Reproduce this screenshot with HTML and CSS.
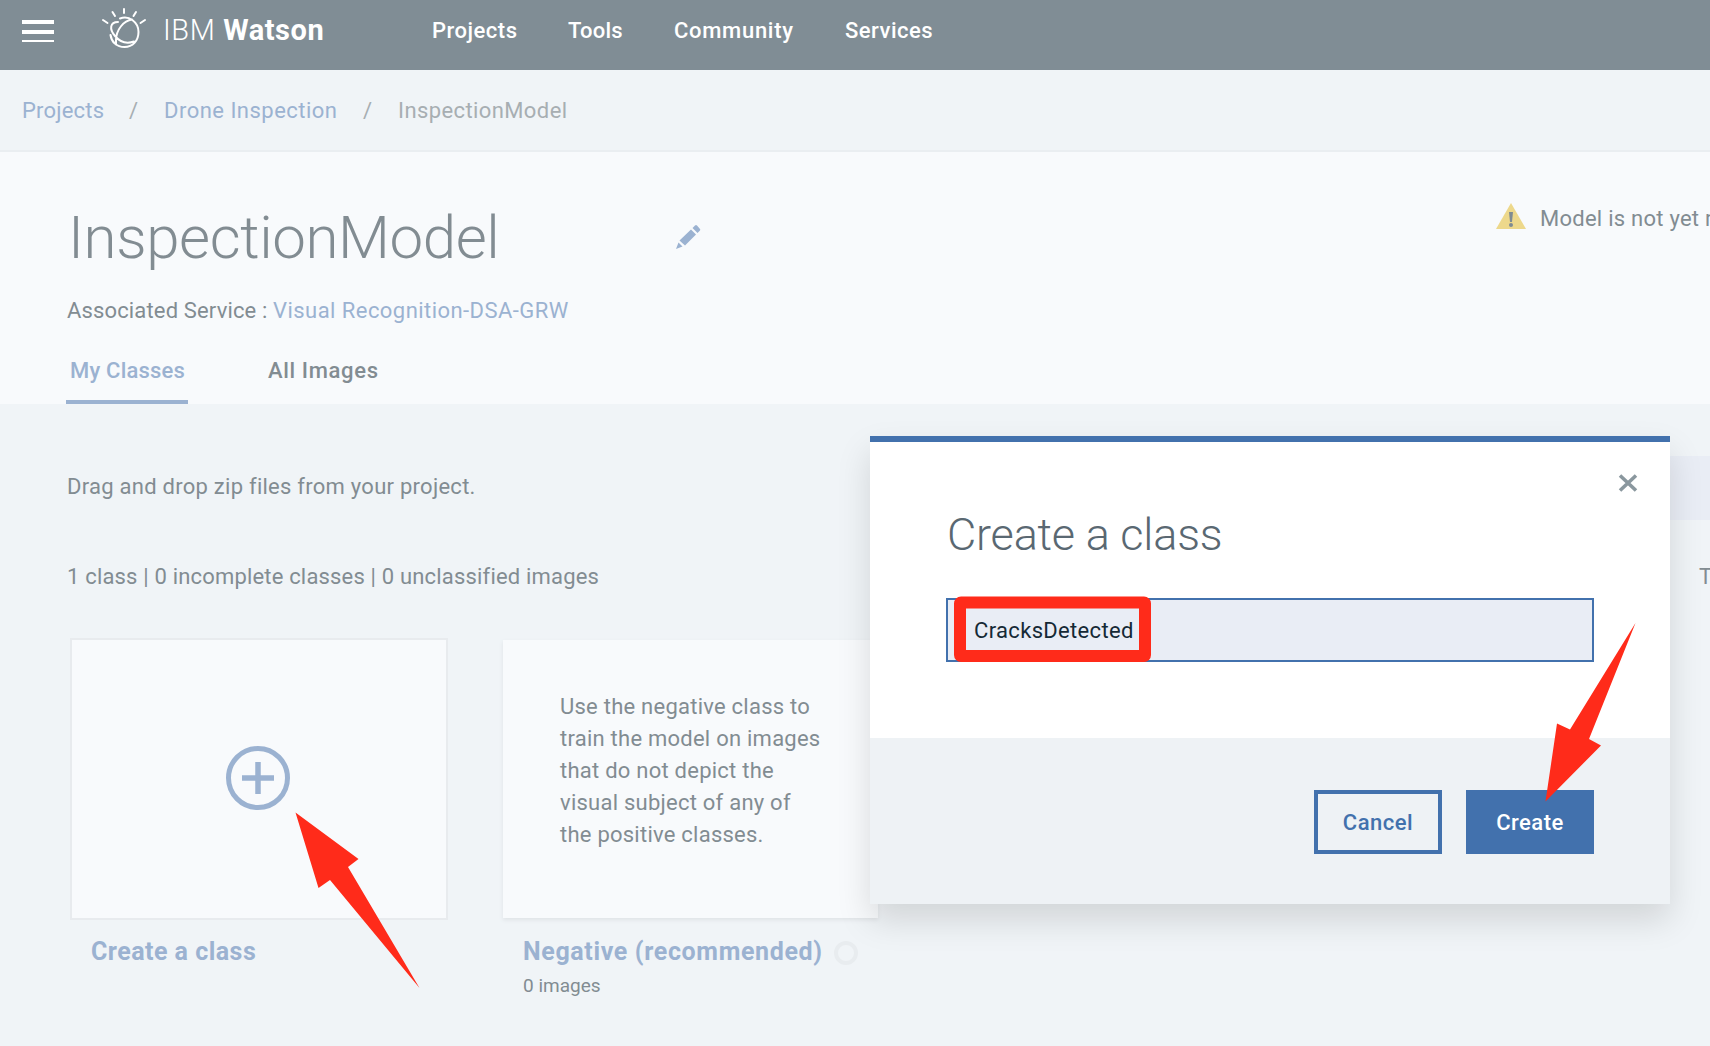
FILE: index.html
```html
<!DOCTYPE html>
<html lang="en"><head><meta charset="utf-8"><title>IBM Watson</title><link rel="stylesheet" href="styles.css"></head>
<body>
<header class="topbar">
  <svg class="burger" viewBox="0 0 32 24" width="32" height="24" fill="#fff"><path d="M0 1h32v4H0zM0 11h32v4H0zM0 21h32v2H0z"/></svg>
  <svg class="logo" viewBox="0 0 46 44" width="46" height="44" fill="none" stroke="#fff" stroke-width="2" stroke-linecap="round"><path d="M19 11.500C28 8 37.500 15 37.500 25c0 9-6 15-14 15-8 0-13-5-14-12M31 12.500c-8 1-16 10-16 21v4M17 15c-8 0-9 7-3 14 5 6 12 8 19 5.500"/><path d="M23 2v4M11.500 5l2.500 4M35 5l-2.500 4M2 13l4.500 3M44 13l-4.500 3"/></svg>
  <span class="brand"><span class="brand-ibm">IBM</span> <b>Watson</b></span>
  <nav class="nav"><a class="n1">Projects</a><a class="n2">Tools</a><a class="n3">Community</a><a class="n4">Services</a></nav>
</header>
<nav class="crumbs"><a class="c1">Projects</a><i>/</i><a class="c2">Drone Inspection</a><i>/</i><span class="c3">InspectionModel</span></nav>
<section class="hero">
  <div class="hero-row"><h1>InspectionModel</h1>
  <svg class="pencil" viewBox="0 0 25 25" width="25" height="25" fill="#9bb2d1"><path d="M19 1.500q1-1 2 0L24 5q.6.800 0 1.600L21.500 9 16.500 4zM15 5.500l5 5L9 21.500l-5.500-5zM2.500 18.500l4 4L0 25z"/></svg>
  <div class="status"><svg viewBox="0 0 30 26" width="30" height="26"><path d="M15 0l15 26H0z" fill="#edd88b"/><path d="M13 9h4l-1 10h-2z" fill="#7f8b92"/><circle cx="15" cy="22" r="2" fill="#7f8b92"/></svg><span>Model is not yet ready to train</span></div></div>
  <p class="service"><span class="s1">Associated Service :</span> <a class="s2">Visual Recognition-DSA-GRW</a></p>
  <div class="tabs"><a class="tab active">My Classes</a><a class="tab">All Images</a></div>
</section>
<main class="content">
  <div class="drag-row"><p class="drag">Drag and drop zip files from your project.</p><div class="search"></div></div>
  <div class="stat-row"><p class="stats">1 class | 0 incomplete classes | 0 unclassified images</p><span class="type">Type</span></div>
  <div class="cards">
    <article class="item"><div class="card bordered"><svg viewBox="0 0 64 64" width="64" height="64" fill="none" stroke="#9bb2d1"><circle cx="32" cy="32" r="29.500" stroke-width="5"/><path d="M16 32h32M32 16v32" stroke-width="5.500"/></svg></div><h2><span class="t1">Create a class</span></h2></article>
    <article class="item"><div class="card note"><p>Use the negative class to<br>train the model on images<br>that do not depict the<br>visual subject of any of<br>the positive classes.</p></div><h2><span class="t2">Negative (recommended)</span><i class="ring"></i></h2><p class="count">0 images</p></article>
  </div>
</main>
<div class="modal">
  <div class="modal-body"><svg class="close" viewBox="0 0 20 18" width="20" height="18"><path d="M2 1.500l16 15M18 1.500l-16 15" stroke="#8a979e" stroke-width="3.600"/></svg><h3>Create a class</h3><div class="field">CracksDetected</div></div>
  <div class="modal-foot"><button class="cancel">Cancel</button><button class="create">Create</button></div>
</div>
<svg class="marks" viewBox="0 0 1710 1046" width="1710" height="1046" fill="#ff2b1a"><path d="M295.500 812.500L358.500 859L348 867L419.500 988L330 880L318.500 888z"/><path d="M1635.500 623L1589 739L1601 745.500L1545.500 801.500L1557 723.500L1570 729.500z"/><rect x="960" y="602.500" width="185" height="53.500" rx="1" fill="none" stroke="#ff2b1a" stroke-width="12" stroke-linejoin="round"/></svg>
</body></html>
```
FILE: styles.css
```css
*{box-sizing:border-box}
body{margin:0;width:1710px;height:1046px;overflow:hidden;background:#f0f4f7;font-family:Roboto,"Liberation Sans",sans-serif;font-size:22px;color:#828c92}
h1,h2,h3,p{margin:0;font-weight:400}
i{font-style:normal}
.topbar{height:70px;background:#808d95;color:#fff;display:flex;padding-left:22px}
.burger{margin-top:19px}
.logo{margin:7px 0 0 47px}
.brand{margin:11px 0 0 16px;font-size:29px;line-height:38px;width:269px;white-space:nowrap;letter-spacing:.58px}
.brand-ibm{font-weight:300}
.nav{display:flex;line-height:62px;font-weight:500;letter-spacing:.5px}
.n1{width:136px}.n2{width:106px;letter-spacing:.2px}.n3{width:171px;letter-spacing:.7px}
.crumbs{height:82px;border-bottom:2px solid #eaeef1;display:flex;align-items:center;padding-left:22px;color:#a7aeb2}
.crumbs a{color:#9bb2d1}
.c1{width:107px;letter-spacing:.2px}.crumbs i{width:35px}.c2{width:199px;letter-spacing:.48px}.c3{letter-spacing:.4px}
.hero{height:252px;background:#f8fafc;padding:46px 0 0 67px;display:flex;flex-direction:column}
.hero-row{display:flex;height:99px}
h1{flex:none;width:609px;padding-left:1px;font-size:60px;font-weight:300;line-height:80px;letter-spacing:-.4px}
.pencil{margin-top:26px;flex:none}
.status{flex:none;margin-left:795px;display:flex;gap:14px;line-height:41px;white-space:nowrap;letter-spacing:.25px}
.status svg{margin-top:5px}
.service{line-height:28px;white-space:nowrap}
.service a{color:#9bb2d1}
.s1{letter-spacing:.15px}.s2{letter-spacing:.45px}
.tabs{display:flex;margin-top:auto;height:62px;font-weight:500;line-height:58px;letter-spacing:.65px;white-space:nowrap}
.tab{padding:0 4px;width:201px}
.active{width:122px;margin:0 76px 0 -1px;color:#9bb2d1;border-bottom:4px solid #9bb2d1;letter-spacing:.2px}
.content{padding-left:67px}
.drag-row{display:flex;height:116px;padding-top:52px}
.drag{flex:none;width:1523px;line-height:61px;letter-spacing:.26px}
.search{width:120px;height:64px;background:#e9edf5}
.stat-row{display:flex;height:118px;padding-top:27px;line-height:60px}
.stats{flex:none;width:1632px;letter-spacing:.18px}
.cards{display:flex;gap:54px;padding-left:3px}
.item{width:378px}
.card{height:282px;background:#f8fafc;display:flex}
.bordered{border:2px solid #e8ebee;padding:106px 0 0 154px;align-items:flex-start}
.note{margin:2px 0 0 1px;height:278px;width:375px;box-shadow:0 2px 4px #dfe3e6;padding:51px 0 0 57px;line-height:32px;white-space:nowrap;letter-spacing:.24px}
h2{font-size:25px;font-weight:700;color:#9bb2d1;height:66px;line-height:62px;padding-left:21px;display:flex;align-items:center;letter-spacing:.47px;padding-bottom:2px}
.t2{letter-spacing:.64px}
.note+h2{margin-top:2px;height:50px;padding-top:14px;padding-bottom:0}
.ring{width:24px;height:24px;border:4px solid #e8ecef;border-radius:50%;margin:1px 0 0 11px}
.count{font-size:19px;line-height:32px;padding-left:21px}
.modal{position:absolute;left:870px;top:436px;width:800px;height:468px;border-top:6px solid #4271ad;background:#fff;box-shadow:0 16px 32px rgba(0,0,0,.13);display:flex;flex-direction:column}
.modal-body{height:296px;flex:none;padding:0 76px;display:flex;flex-direction:column}
.close{align-self:flex-end;margin:32px -44px 0 0;flex:none}
h3{font-size:45px;font-weight:300;line-height:60px;margin-top:13px;color:#5a6872;height:60px;padding-left:1px;letter-spacing:-.2px}
.field{margin-top:33px;height:64px;border:2px solid #4271ad;background:#e9edf5;color:#152935;padding-left:26px;line-height:61px;letter-spacing:.33px}
.modal-foot{flex:1;background:#eef2f5;display:flex;justify-content:flex-end;gap:24px;padding:52px 76px 0}
button{width:128px;height:64px;border:4px solid #4271ad;font:500 22px Roboto,sans-serif;letter-spacing:.5px;padding:0;color:#4271ad;background:transparent}
.create{background:#4271ad;color:#fff}
.marks{position:absolute;left:0;top:0}
```
